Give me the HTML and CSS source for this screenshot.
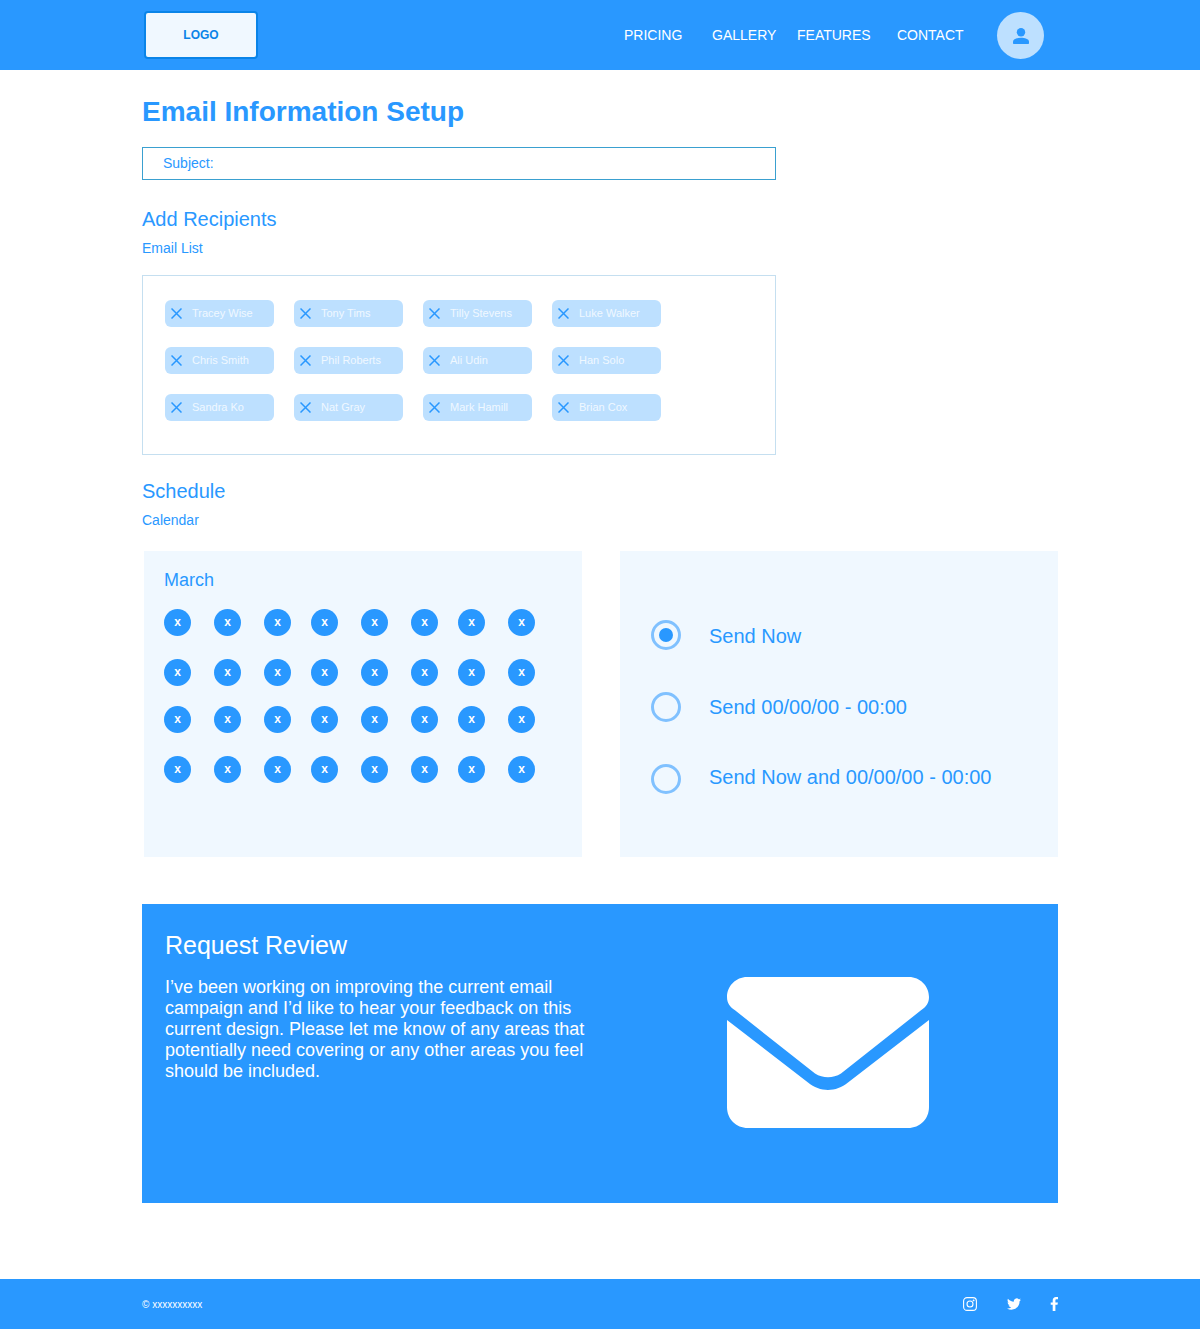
FILE: index.html
```html
<!DOCTYPE html>
<html lang="en">
<head>
  <meta charset="UTF-8">
  <title>Email Information Setup</title>
  <link rel="stylesheet" href="styles.css">
</head>
<body>

  <svg class="defs" aria-hidden="true">
    <symbol id="cross" viewBox="0 0 11 11">
      <path d="M0.5 0.5L10.5 10.5M10.5 0.5L0.5 10.5" fill="none" stroke="currentColor" stroke-width="1.5"/>
    </symbol>
  </svg>

  <header class="topbar">
    <div class="topbar-inner">
      <div class="logo">LOGO</div>
      <nav class="nav">
        <a href="#">PRICING</a>
        <a href="#">GALLERY</a>
        <a href="#">FEATURES</a>
        <a href="#">CONTACT</a>
        <div class="avatar">
          <svg width="16" height="16" viewBox="0 0 16 16">
            <circle cx="8" cy="4.200" r="4.200" fill="currentColor"/>
            <path d="M0 15V13.600C0 11 4.500 9.800 8 9.800S16 11 16 13.600V15C16 15.600 15.600 16 15 16H1C0.400 16 0 15.600 0 15Z" fill="currentColor"/>
          </svg>
        </div>
      </nav>
    </div>
  </header>

  <main class="page">
    <h1>Email Information Setup</h1>
    <div class="subject">Subject:</div>

    <h2>Add Recipients</h2>
    <p class="label">Email List</p>
    <div class="recipients">
      <div class="chip"><svg class="chip-x"><use href="#cross"/></svg>Tracey Wise</div>
      <div class="chip"><svg class="chip-x"><use href="#cross"/></svg>Tony Tims</div>
      <div class="chip"><svg class="chip-x"><use href="#cross"/></svg>Tilly Stevens</div>
      <div class="chip"><svg class="chip-x"><use href="#cross"/></svg>Luke Walker</div>
      <div class="chip"><svg class="chip-x"><use href="#cross"/></svg>Chris Smith</div>
      <div class="chip"><svg class="chip-x"><use href="#cross"/></svg>Phil Roberts</div>
      <div class="chip"><svg class="chip-x"><use href="#cross"/></svg>Ali Udin</div>
      <div class="chip"><svg class="chip-x"><use href="#cross"/></svg>Han Solo</div>
      <div class="chip"><svg class="chip-x"><use href="#cross"/></svg>Sandra Ko</div>
      <div class="chip"><svg class="chip-x"><use href="#cross"/></svg>Nat Gray</div>
      <div class="chip"><svg class="chip-x"><use href="#cross"/></svg>Mark Hamill</div>
      <div class="chip"><svg class="chip-x"><use href="#cross"/></svg>Brian Cox</div>
    </div>

    <h2 class="schedule">Schedule</h2>
    <p class="label">Calendar</p>
    <div class="panels">
      <section class="panel calendar">
        <h3>March</h3>
        <div class="days">
          <span>x</span><span>x</span><span>x</span><span>x</span><span>x</span><span>x</span><span>x</span><span>x</span>
          <span>x</span><span>x</span><span>x</span><span>x</span><span>x</span><span>x</span><span>x</span><span>x</span>
          <span>x</span><span>x</span><span>x</span><span>x</span><span>x</span><span>x</span><span>x</span><span>x</span>
          <span>x</span><span>x</span><span>x</span><span>x</span><span>x</span><span>x</span><span>x</span><span>x</span>
        </div>
      </section>
      <section class="panel options">
        <div class="option"><span class="radio checked"></span><span class="opt-first">Send Now</span></div>
        <div class="option"><span class="radio"></span><span>Send 00/00/00 - 00:00</span></div>
        <div class="option"><span class="radio"></span><span class="opt-last">Send Now and 00/00/00 - 00:00</span></div>
      </section>
    </div>

    <section class="review">
      <div class="review-text">
        <h2>Request Review</h2>
        <p>I’ve been working on improving the current email campaign and I’d like to hear your feedback on this current design. Please let me know of any areas that potentially need covering or any other areas you feel should be included.</p>
      </div>
      <svg class="mail" width="202" height="151" viewBox="0 0 202 151">
        <path d="M0 20C0 9 9 0 20 0H182C193 0 202 9 202 20C202 26 199 30 194 33.300L114 96.500C106 101.500 96 101.500 88 96.500L8 33.300C3 30 0 26 0 20Z" fill="#fff"/>
        <path d="M0 43L81 105.600C93 115.500 109 115.500 121 105.600L202 43V130C202 142 193 151 181 151H21C9 151 0 142 0 130Z" fill="#fff"/>
      </svg>
    </section>
  </main>

  <footer class="footer">
    <div class="footer-inner">
      <span class="copy">© xxxxxxxxxx</span>
      <div class="social">
        <svg class="instagram" width="14" height="14" viewBox="0 0 14 14" fill="none" stroke="#fff" stroke-width="1.100">
          <rect x="0.600" y="0.600" width="12.800" height="12.800" rx="3.500"/>
          <circle cx="7" cy="7" r="3"/>
          <circle cx="10.600" cy="3.400" r="0.400"/>
        </svg>
        <svg width="14" height="14" viewBox="0 0 24 24" fill="#fff">
          <path d="M23.953 4.57a10 10 0 01-2.825.775 4.958 4.958 0 002.163-2.723c-.951.555-2.005.959-3.127 1.184a4.92 4.92 0 00-8.384 4.482C7.69 8.095 4.067 6.13 1.64 3.162a4.822 4.822 0 00-.666 2.475c0 1.71.87 3.213 2.188 4.096a4.904 4.904 0 01-2.228-.616v.06a4.923 4.923 0 003.946 4.827 4.996 4.996 0 01-2.212.085 4.936 4.936 0 004.604 3.417 9.867 9.867 0 01-6.102 2.105c-.39 0-.779-.023-1.17-.067a13.995 13.995 0 007.557 2.209c9.053 0 13.998-7.496 13.998-13.985 0-.21 0-.42-.015-.63A9.935 9.935 0 0024 4.59z"/>
        </svg>
        <svg width="8" height="14" viewBox="0 0 8 14" fill="#fff">
          <path d="M2.700 14V7.800H0.700V5.400H2.700V3.600C2.700 1.300 4 0 6 0C6.900 0 7.600 0.100 8 0.100V2.300H6.700C5.700 2.300 5.400 2.800 5.400 3.600V5.400H7.900L7.500 7.800H5.400V14Z"/>
        </svg>
      </div>
    </div>
  </footer>

</body>
</html>
```

FILE: styles.css
```css
* {
  box-sizing: border-box;
}

body {
  margin: 0;
  background-color: #fff;
  color: #2998ff;
  font-family: "Liberation Sans", Arial, sans-serif;
}

.defs {
  display: none;
}

.topbar {
  background-color: #2998ff;
  height: 70px;
}

.topbar-inner {
  width: 916px;
  height: 70px;
  margin: 0 auto;
  padding: 11px 0 0 2px;
  display: flex;
  justify-content: space-between;
}

.logo {
  width: 114px;
  height: 48px;
  background-color: #f0f8ff;
  border: 2px solid #0a84e8;
  border-radius: 4px;
  color: #0a84e8;
  font-size: 12px;
  font-weight: bold;
  line-height: 44px;
  text-align: center;
}

.nav {
  display: grid;
  grid-template-columns: 88px 85px 100px 100px 47px;
  height: 48px;
  margin-right: 14px;
  align-items: center;
}

.nav a {
  color: #fff;
  font-size: 14px;
  text-decoration: none;
}

.avatar {
  width: 47px;
  height: 47px;
  margin-top: 1px;
  background-color: #bde0ff;
  border-radius: 50%;
  color: #2998ff;
  display: flex;
  align-items: center;
  justify-content: center;
}

.page {
  width: 916px;
  margin: 0 auto;
}

h1 {
  margin: 26px 0 19px;
  font-size: 28px;
  line-height: 32px;
}

h2 {
  margin: 27px 0 0;
  font-size: 20px;
  font-weight: normal;
  line-height: 24px;
}

h2.schedule {
  margin-top: 24px;
}

.label {
  margin: 9px 0 0;
  font-size: 14px;
  line-height: 16px;
}

.subject {
  width: 634px;
  height: 33px;
  padding-left: 20px;
  border: 1px solid #3aa0d0;
  font-size: 14px;
  line-height: 31px;
}

.recipients {
  width: 634px;
  height: 180px;
  margin-top: 19px;
  padding: 24px 22px;
  border: 1px solid #c5dff0;
  display: grid;
  grid-template-columns: repeat(4, 109px);
  grid-auto-rows: 27px;
  gap: 20px;
}

.chip {
  background-color: #bde0ff;
  border-radius: 6px;
  color: #f0f8ff;
  font-size: 11px;
  line-height: 26px;
  display: flex;
}

.chip-x {
  width: 11px;
  height: 11px;
  margin: 8px 10px 0 6px;
  color: #2998ff;
}

.panels {
  display: grid;
  grid-template-columns: 438px 438px;
  gap: 38px;
  margin: 23px 0 0 2px;
}

.panel {
  height: 306px;
  background-color: #f0f8ff;
}

.calendar {
  padding: 18px 20px;
}

h3 {
  margin: 0 0 18px;
  font-size: 18px;
  font-weight: normal;
  line-height: 22px;
}

.days {
  display: grid;
  grid-template-columns: 50px 50px 47px 50px 50px 47px 50px 27px;
  grid-template-rows: 50px 47px 50px 27px;
}

.days span {
  width: 27px;
  height: 27px;
  background-color: #2998ff;
  border-radius: 50%;
  color: #fff;
  font-size: 12px;
  font-weight: bold;
  line-height: 27px;
  text-align: center;
}

.options {
  padding: 69px 0 0 31px;
  display: flex;
  flex-direction: column;
  gap: 42px;
}

.option {
  height: 30px;
  display: flex;
  align-items: center;
  gap: 28px;
  font-size: 20px;
}

.opt-first {
  margin-top: 2px;
}

.opt-last {
  margin-bottom: 4px;
}

.radio {
  width: 30px;
  height: 30px;
  border: 3px solid #80c1ff;
  border-radius: 50%;
  display: flex;
  align-items: center;
  justify-content: center;
}

.radio.checked::after {
  content: "";
  width: 14px;
  height: 14px;
  background-color: #2998ff;
  border-radius: 50%;
}

.review {
  height: 299px;
  margin-top: 47px;
  padding: 26px 0 0 23px;
  background-color: #2998ff;
  color: #fff;
  display: flex;
}

.review-text {
  width: 424px;
}

.review h2 {
  margin: 0 0 17px;
  font-size: 25px;
  line-height: 30px;
}

.review p {
  margin: 0;
  font-size: 18px;
  line-height: 21px;
}

.mail {
  margin: 47px 0 0 138px;
}

.footer {
  height: 50px;
  margin-top: 76px;
  background-color: #2998ff;
  color: #fff;
}

.footer-inner {
  width: 916px;
  height: 50px;
  margin: 0 auto;
  display: flex;
  justify-content: space-between;
  align-items: center;
}

.copy {
  margin-top: 1px;
  font-size: 10px;
}

.social {
  display: flex;
  align-items: center;
  gap: 29px;
}

.instagram {
  margin-right: 1px;
}
```
